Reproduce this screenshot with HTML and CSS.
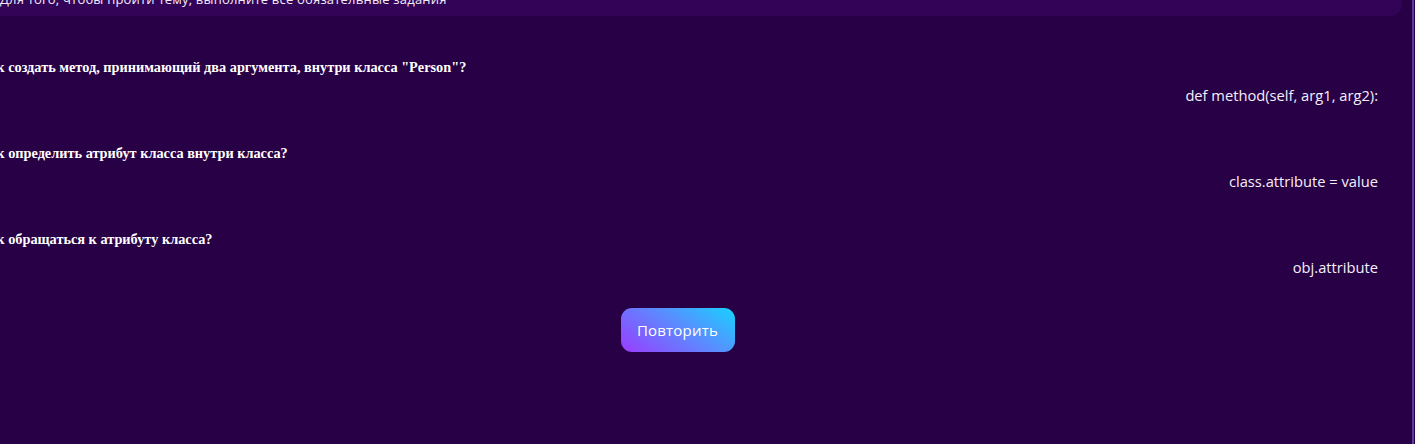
FILE: index.html
```html
<!DOCTYPE html>
<html lang="ru">
<head>
<meta charset="utf-8">
<link rel="stylesheet" href="styles.css">
</head>
<body>
<div class="page">
  <div class="banner">Для того, чтобы пройти тему, выполните все обязательные задания</div>
  <div class="list">
    <div class="item">
      <div class="question">Как создать метод, принимающий два аргумента, внутри класса "Person"?</div>
      <div class="answer">def method(self, arg1, arg2):</div>
    </div>
    <div class="item">
      <div class="question">Как определить атрибут класса внутри класса?</div>
      <div class="answer">class.attribute = value</div>
    </div>
    <div class="item">
      <div class="question">Как обращаться к атрибуту класса?</div>
      <div class="answer">obj.attribute</div>
    </div>
  </div>
  <div class="actions">
    <button class="retry">Повторить</button>
  </div>
</div>
<div class="scroll-edge"></div>
</body>
</html>
```
FILE: styles.css
```css
html, body {
  margin: 0;
  padding: 0;
  background: #270045;
  height: 100%;
  overflow: hidden;
}
body {
  position: relative;
  font-family: "Open Sans", "Noto Sans", sans-serif;
  color: #ffffff;
}
.page {
  margin-left: -21px;
  width: 1423px;
}
.banner {
  margin-top: -12px;
  height: 28px;
  background: #330358;
  border-radius: 0 0 12px 0;
  box-sizing: border-box;
  padding: 3px 0 0 21px;
  font-size: 13px;
  line-height: 16px;
  color: #f2ecf7;
  letter-spacing: 0.2px;
}
.list {
  padding-top: 43px;
  display: flex;
  flex-direction: column;
  gap: 42px;
}
.item {
  display: flex;
  flex-direction: column;
  gap: 12px;
}
.question {
  font-family: "Liberation Serif", "Times New Roman", serif;
  font-weight: bold;
  font-size: 14.3px;
  line-height: 16px;
}
.answer {
  text-align: right;
  font-size: 14.7px;
  line-height: 16px;
  color: #f4effa;
  padding-right: 24px;
}
.actions {
  display: flex;
  justify-content: center;
  padding-top: 33px;
  padding-right: 26px;
}
.retry {
  width: 114px;
  height: 44px;
  border: none;
  border-radius: 11px;
  background: linear-gradient(215deg, #18d2ff 0%, #5a8cff 45%, #9a3cff 100%);
  color: #ffffff;
  font-family: "Open Sans", "Noto Sans", sans-serif;
  font-size: 15px;
  letter-spacing: 0.2px;
}
.scroll-edge {
  position: absolute;
  top: 0;
  right: 1px;
  width: 2px;
  height: 100%;
  background: #5b3d9e;
}
```
